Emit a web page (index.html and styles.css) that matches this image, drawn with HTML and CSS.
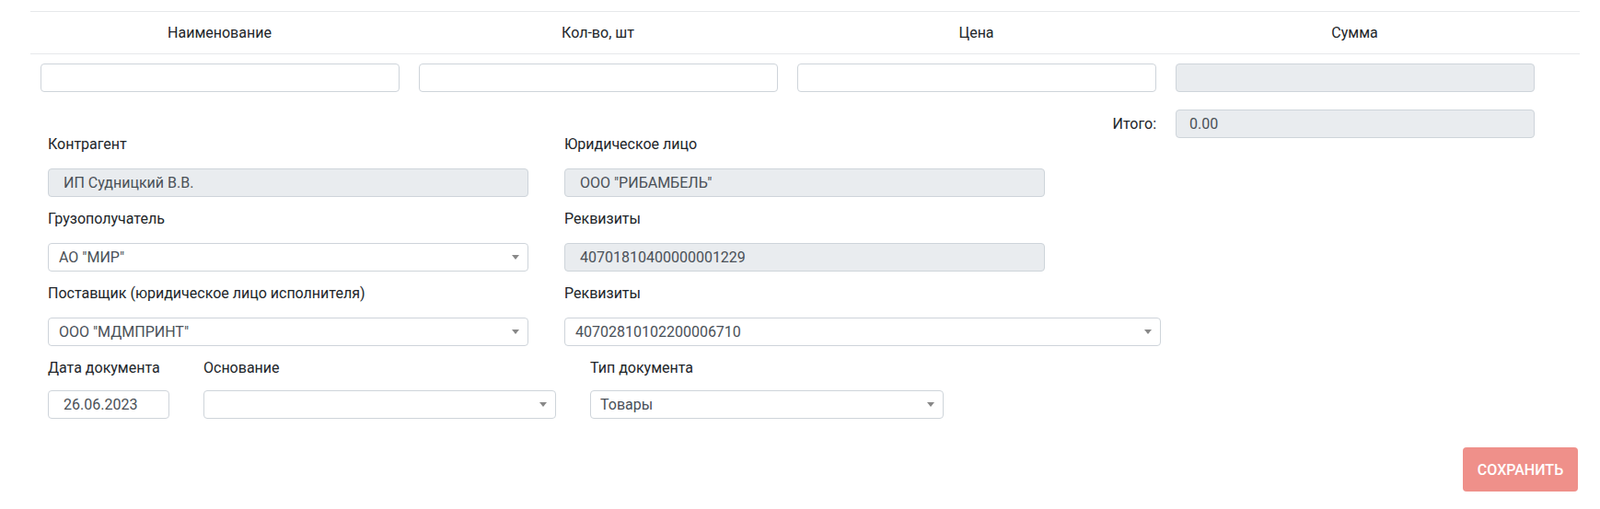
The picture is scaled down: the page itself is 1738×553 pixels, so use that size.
FILE: index.html
```html
<!DOCTYPE html>
<html lang="ru">
<head>
    <meta charset="UTF-8">
    <meta name="viewport" content="width=device-width, initial-scale=1.0">
    <title>Документ</title>
    <link rel="stylesheet" href="styles.css">
</head>
<body>
    <div class="page">
        <div class="items">
            <div class="items-head">
                <div class="cell">Наименование</div>
                <div class="cell">Кол-во, шт</div>
                <div class="cell">Цена</div>
                <div class="cell">Сумма</div>
                <div class="cell"></div>
            </div>
            <div class="items-row">
                <div class="cell"><input type="text" class="field"></div>
                <div class="cell"><input type="text" class="field"></div>
                <div class="cell"><input type="text" class="field"></div>
                <div class="cell"><input type="text" class="field" disabled></div>
                <div class="cell"></div>
            </div>
            <div class="items-total">
                <div class="cell total-label">Итого:</div>
                <div class="cell"><input type="text" class="field total-value" value="0.00" disabled></div>
                <div class="cell"></div>
            </div>
        </div>

        <div class="form">
            <div class="group">
                <label>Контрагент</label>
                <input type="text" class="field" value="ИП Судницкий В.В." disabled>
            </div>
            <div class="group">
                <label>Юридическое лицо</label>
                <input type="text" class="field" value="ООО &quot;РИБАМБЕЛЬ&quot;" disabled>
            </div>

            <div class="group">
                <label>Грузополучатель</label>
                <div class="select"><select><option>АО "МИР"</option></select></div>
            </div>
            <div class="group">
                <label>Реквизиты</label>
                <input type="text" class="field" value="40701810400000001229" disabled>
            </div>

            <div class="group">
                <label>Поставщик (юридическое лицо исполнителя)</label>
                <div class="select"><select><option>ООО "МДМПРИНТ"</option></select></div>
            </div>
            <div class="group">
                <label>Реквизиты</label>
                <div class="select wide"><select><option>40702810102200006710</option></select></div>
            </div>

            <div class="bottom-row">
                <div class="group date">
                    <label>Дата документа</label>
                    <input type="text" class="field" value="26.06.2023">
                </div>
                <div class="group basis">
                    <label>Основание</label>
                    <div class="select"><select><option></option></select></div>
                </div>
                <div class="group doctype">
                    <label>Тип документа</label>
                    <div class="select"><select><option>Товары</option></select></div>
                </div>
            </div>
        </div>

        <div class="actions">
            <button class="btn-save" disabled>Сохранить</button>
        </div>
    </div>
</body>
</html>
```

FILE: styles.css
```css
body {
    margin: 0;
    font-family: Roboto, "Liberation Sans", sans-serif;
    font-size: 16px;
    color: #212529;
    background-color: #fff;
}

.page {
    padding: 12px 22px 0 33px;
}

/* таблица позиций */
.items-head,
.items-row {
    display: grid;
    grid-template-columns: repeat(4, 411px) 1fr;
}

.items-head {
    border-top: 1px solid #e6e8eb;
    border-bottom: 1px solid #e6e8eb;
}

.items-head .cell {
    padding: 12px 0 11px;
    line-height: 22px;
    text-align: center;
}

.items-row .cell {
    padding: 10px 10px 0 11px;
}

.items-total {
    display: grid;
    grid-template-columns: 1233px 411px 1fr;
    align-items: center;
    margin-top: 19px;
}

.items-total .cell {
    padding: 0 10px 0 11px;
}

.total-label {
    text-align: right;
}

.field {
    display: block;
    box-sizing: border-box;
    width: 100%;
    height: 31px;
    padding: 0 16px;
    font-family: inherit;
    font-size: 16px;
    color: #495057;
    background-color: #fff;
    border: 1px solid #ced4da;
    border-radius: 4px;
}

.field:disabled {
    background-color: #e9ecef;
    color: #495057;
}

.total-value {
    padding-left: 14px;
}

/* форма реквизитов */
.form {
    display: grid;
    grid-template-columns: 522px 522px;
    column-gap: 39px;
    padding-left: 19px;
    margin-top: -2px;
}

.group {
    margin-bottom: 15px;
}

.group label {
    display: block;
    line-height: 18px;
    margin-bottom: 17px;
}

.select {
    position: relative;
    width: 100%;
}

.select.wide {
    width: 648px;
}

.select select {
    display: block;
    box-sizing: border-box;
    width: 100%;
    height: 31px;
    padding: 0 30px 0 11px;
    font-family: inherit;
    font-size: 16px;
    color: #495057;
    background-color: #fff;
    border: 1px solid #ced4da;
    border-radius: 4px;
    appearance: none;
    -webkit-appearance: none;
}

.select::after {
    content: "";
    position: absolute;
    right: 10px;
    top: 13px;
    border-left: 4.5px solid transparent;
    border-right: 4.5px solid transparent;
    border-top: 5px solid #888;
    pointer-events: none;
}

.bottom-row {
    grid-column: 1 / 3;
    display: flex;
    gap: 37px;
}

.bottom-row .group label {
    margin-bottom: 15px;
}

.date {
    width: 132px;
}

.basis {
    width: 383px;
}

.doctype {
    width: 384px;
}

.doctype .select select {
    padding-left: 10px;
}

.actions {
    display: flex;
    justify-content: flex-end;
    margin-top: 16px;
    padding-right: 2px;
}

.btn-save {
    height: 48px;
    width: 125px;
    font-family: inherit;
    font-size: 16px;
    font-weight: 500;
    text-transform: uppercase;
    color: #fff;
    background-color: #ef908a;
    border: none;
    border-radius: 4px;
}
```
